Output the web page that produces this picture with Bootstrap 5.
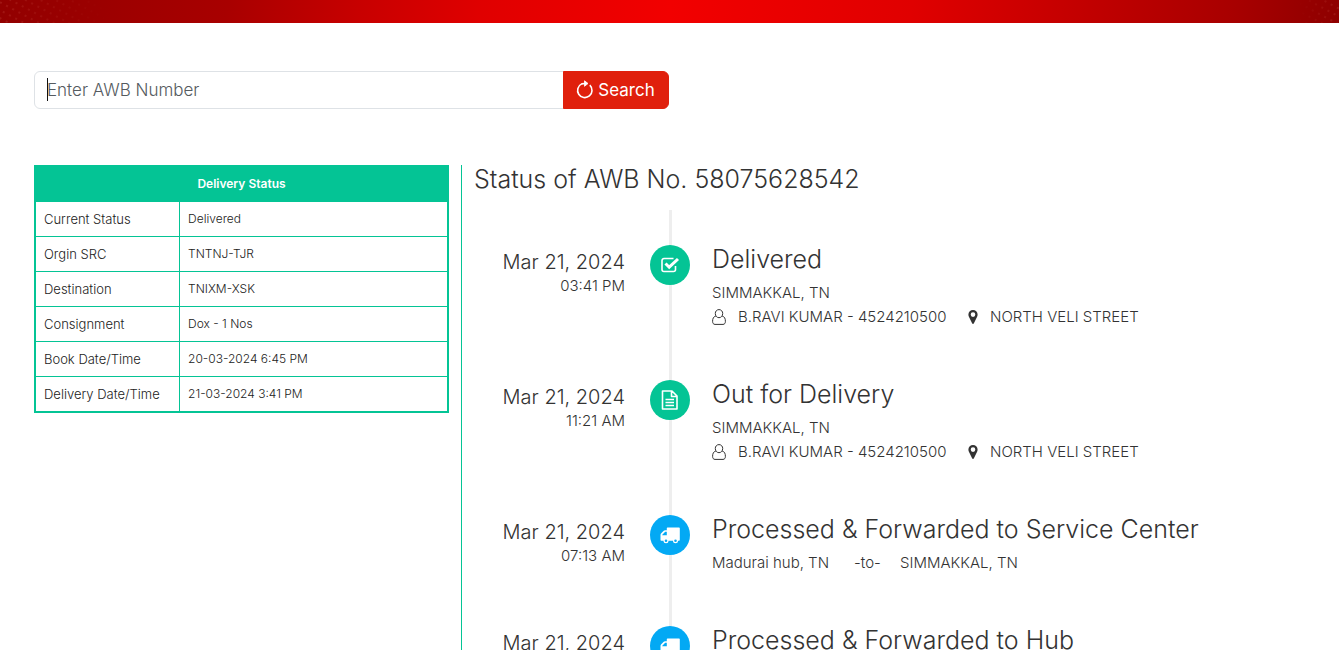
<!DOCTYPE html>
<html lang="en">
<head>
<meta charset="utf-8">
<meta name="viewport" content="width=device-width, initial-scale=1">
<title>Track AWB</title>
<link href="https://cdn.jsdelivr.net/npm/bootstrap@5.3.0/dist/css/bootstrap.min.css" rel="stylesheet">
<style>
body{font-family:Inter,"Open Sans",sans-serif;font-weight:300;color:#333;font-size:15px;line-height:24px}
.top-banner{height:23px;background:linear-gradient(97deg,#920000 0,#a80000 17%,#c80000 27%,#e00000 36%,#f20000 50%,#e00000 68%,#c40000 80%,#a80000 92%,#8e0000 100%)}
.page-wrap{padding:48px 0 0 22px}
.gutter-x{padding-left:12px;padding-right:12px}
.awb-input,.awb-input::placeholder{font-size:17px;font-weight:300;color:#555b60}
.awb-input{height:38px;border-color:#dee2e6;line-height:22px}
.caret-bar{left:13px;top:7px;width:1px;height:23px;background:#111;z-index:6}
.btn-search{--bs-btn-color:#fff;--bs-btn-bg:#e0200c;--bs-btn-border-color:#e0200c;--bs-btn-hover-color:#fff;--bs-btn-hover-bg:#c51a08;width:106px;font-size:17px;line-height:24px;padding:0}
.results-row{margin-top:56px}
.status-table{border-collapse:collapse;border:2px solid #04c495;font-size:12px;line-height:18px;color:#222}
.status-table th,.status-table td{border:1px solid #04c495;padding:8px}
.status-table thead th{background:#04c495;color:#fff;font-weight:600;text-align:center}
.status-table tbody th{font-size:13px;font-weight:300;width:35%}
.timeline-col{border-left:1px solid #04c495;min-height:485px}
.status-title,.event-title{font-size:25px;line-height:28px;font-weight:300;margin:0}
.timeline{margin-top:17px;padding-top:35px;background:linear-gradient(#eee,#eee) 195px 0/3px 100% no-repeat}
.event-row{padding-bottom:51px}
.event-date{width:151px;margin-right:25px;padding-top:5px;text-align:right}
.event-day{font-size:20px}
.event-dot{width:40px;height:40px;margin-right:22px;color:#fff}
.contact-name{min-width:218px}
.route-from{min-width:126px}
.route-to{min-width:30px}
.dot-green{background:#04c495}
.dot-blue{background:#03a9f4}
</style>
</head>
<body>
<svg width="0" height="0" class="position-absolute" aria-hidden="true">
  <symbol id="i-check" viewBox="0 0 20 18"><path d="M15.500 10v3.500a2 2 0 0 1-2 2H4a2 2 0 0 1-2-2V4.500a2 2 0 0 1 2-2H13.500" fill="none" stroke="currentColor" stroke-width="1.600"/><path d="M5.500 7.500l3.700 3.700L18 3" fill="none" stroke="currentColor" stroke-width="3"/></symbol>
  <symbol id="i-file" viewBox="0 0 20 20"><path d="M2.500 1h9.500l5 5v13H2.500zM11.500 1v5.500H17M5.500 9.500h8.500M5.500 12.500h8.500M5.500 15.500h8.500" fill="none" stroke="currentColor" stroke-width="1.600" stroke-linejoin="round"/></symbol>
  <symbol id="i-truck" viewBox="0 0 20 18"><path fill="currentColor" fill-rule="evenodd" d="M7.500 1.500H19q.8 0 .8.800V14q0 .8-.8.800h-1a2.500 2.500 0 0 1-5 0H8.500a2.500 2.500 0 0 1-5 0H1.300q-.8 0-.8-.8V9q0-1 .7-1.700L3.700 4.800q.6-.6 1.300-.6h1.800V2.300q0-.8.7-.8zM2.300 9.300h4.500V5.800H5.200L2.300 8.800zM6 13.400a1.300 1.300 0 1 0 .01 2.600a1.300 1.300 0 0 0 0-2.600zm9.500 0a1.300 1.300 0 1 0 .01 2.600a1.300 1.300 0 0 0 0-2.600z"/></symbol>
  <symbol id="i-user" viewBox="0 0 14 16"><path d="M7 .6a3.700 3.700 0 0 1 3.700 3.900C10.700 6.900 9.100 8.700 7 8.700S3.300 6.900 3.300 4.500A3.700 3.700 0 0 1 7 .6zM3.900 7C1.400 7.500.6 9.800.6 12.300c0 1.900.8 3.100 2.400 3.100h8c1.600 0 2.400-1.200 2.400-3.100 0-2.500-.8-4.800-3.300-5.300" fill="none" stroke="currentColor" stroke-width="1"/></symbol>
  <symbol id="i-pin" viewBox="0 0 10 14"><path fill="currentColor" fill-rule="evenodd" d="M5 0a4.600 4.600 0 0 1 4.600 4.600c0 1-.2 1.500-.5 2.100L5.900 13.200q-.3.800-.9.800t-.9-.8L.9 6.700C.6 6.100.4 5.600.4 4.600A4.600 4.600 0 0 1 5 0zm0 2.300a2.300 2.300 0 1 0 .01 4.600A2.300 2.300 0 0 0 5 2.300z"/></symbol>
</svg>
<header class="top-banner">
  <svg class="d-block w-100 h-100" aria-hidden="true">
    <defs><pattern id="dots" width="7" height="7" patternUnits="userSpaceOnUse" patternTransform="rotate(28)"><circle cx="2" cy="2" r=".8" fill="#d65c50" fill-opacity=".5"/></pattern>
    <linearGradient id="fade"><stop offset="0" stop-color="#fff"/><stop offset=".08" stop-color="#000"/><stop offset=".97" stop-color="#000"/><stop offset="1" stop-color="#fff"/></linearGradient>
    <mask id="edges"><rect width="100%" height="100%" fill="url(#fade)"/></mask></defs>
    <rect width="100%" height="100%" fill="url(#dots)" mask="url(#edges)"/>
  </svg>
</header>
<main class="page-wrap">
  <form class="row g-0">
    <div class="col-6 gutter-x">
      <div class="position-relative">
        <div class="input-group">
          <input type="text" class="form-control awb-input" placeholder="Enter AWB Number" aria-label="Enter AWB Number">
          <button type="button" class="btn btn-search d-flex align-items-center justify-content-center gap-1"><svg width="18" height="20" viewBox="0 0 18 20" fill="none" stroke="currentColor" stroke-width="1.600" aria-hidden="true"><path d="M13.800 5.200a7.200 7.200 0 1 1-8.100-1.300L9 3.500"/><path d="M8.500 .8l3.500 2.700-3.500 2.800z" fill="currentColor" stroke-width=".8"/></svg><span>Search</span></button>
        </div>
        <span class="caret-bar position-absolute"></span>
      </div>
    </div>
  </form>
  <div class="row g-0 results-row">
    <div class="col-4 gutter-x">
      <table class="status-table w-100">
        <thead><tr><th colspan="2">Delivery Status</th></tr></thead>
        <tbody>
          <tr><th scope="row">Current Status</th><td>Delivered</td></tr>
          <tr><th scope="row">Orgin SRC</th><td>TNTNJ-TJR</td></tr>
          <tr><th scope="row">Destination</th><td>TNIXM-XSK</td></tr>
          <tr><th scope="row">Consignment</th><td>Dox - 1 Nos</td></tr>
          <tr><th scope="row">Book Date/Time</th><td>20-03-2024 6:45 PM</td></tr>
          <tr><th scope="row">Delivery Date/Time</th><td>21-03-2024 3:41 PM</td></tr>
        </tbody>
      </table>
    </div>
    <section class="col-8 timeline-col gutter-x">
      <h4 class="status-title">Status of AWB No. 58075628542</h4>
      <div class="timeline">
        <article class="event-row d-flex align-items-start">
          <div class="event-date"><div class="event-day">Mar 21, 2024</div><div>03:41 PM</div></div>
          <div class="event-dot dot-green rounded-circle d-flex align-items-center justify-content-center"><svg width="20" height="18"><use href="#i-check"/></svg></div>
          <div><h4 class="event-title mb-2">Delivered</h4><div>SIMMAKKAL, TN</div>
          <div class="d-flex align-items-center"><svg class="me-2" width="14" height="16"><use href="#i-user"/></svg><span class="contact-name ms-1 me-2">B.RAVI KUMAR - 4524210500</span><svg class="ms-1 me-2" width="10" height="14"><use href="#i-pin"/></svg><span class="ms-1">NORTH VELI STREET</span></div></div>
        </article>
        <article class="event-row d-flex align-items-start">
          <div class="event-date"><div class="event-day">Mar 21, 2024</div><div>11:21 AM</div></div>
          <div class="event-dot dot-green rounded-circle d-flex align-items-center justify-content-center"><svg width="20" height="20"><use href="#i-file"/></svg></div>
          <div><h4 class="event-title mb-2">Out for Delivery</h4><div>SIMMAKKAL, TN</div>
          <div class="d-flex align-items-center"><svg class="me-2" width="14" height="16"><use href="#i-user"/></svg><span class="contact-name ms-1 me-2">B.RAVI KUMAR - 4524210500</span><svg class="ms-1 me-2" width="10" height="14"><use href="#i-pin"/></svg><span class="ms-1">NORTH VELI STREET</span></div></div>
        </article>
        <article class="event-row d-flex align-items-start">
          <div class="event-date"><div class="event-day">Mar 21, 2024</div><div>07:13 AM</div></div>
          <div class="event-dot dot-blue rounded-circle d-flex align-items-center justify-content-center"><svg width="20" height="18"><use href="#i-truck"/></svg></div>
          <div><h4 class="event-title mb-2">Processed &amp; Forwarded to Service Center</h4><div class="d-flex gap-3"><span class="route-from">Madurai hub, TN</span><span class="route-to">-to-</span><span>SIMMAKKAL, TN</span></div></div>
        </article>
        <article class="event-row d-flex align-items-start">
          <div class="event-date"><div class="event-day">Mar 21, 2024</div></div>
          <div class="event-dot dot-blue rounded-circle d-flex align-items-center justify-content-center"><svg width="20" height="18"><use href="#i-truck"/></svg></div>
          <div><h4 class="event-title mb-2">Processed &amp; Forwarded to Hub</h4></div>
        </article>
      </div>
    </section>
  </div>
</main>
<script src="https://cdn.jsdelivr.net/npm/bootstrap@5.3.0/dist/js/bootstrap.bundle.min.js"></script>
</body>
</html>
